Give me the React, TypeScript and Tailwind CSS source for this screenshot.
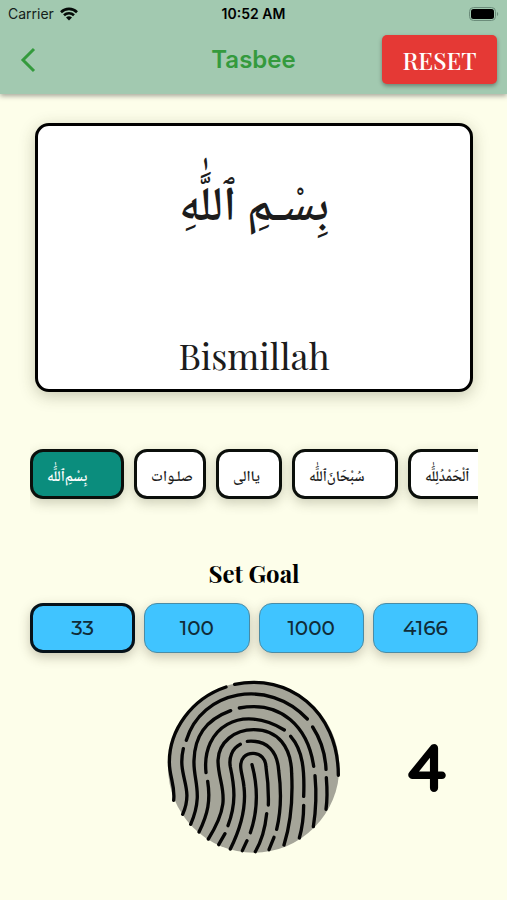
import React, { useState } from "react";

const phrases = [
  { text: "بِسْمِ‌ٱللَّٰه", width: "w-[94px]" },
  { text: "صلـوات", width: "w-[72px]" },
  { text: "ياالى", width: "w-[66px]" },
  { text: "سُبْحَانَ‌ٱللَّٰه", width: "w-[106px]" },
  { text: "ٱلْحَمْدُلِلَّٰه", width: "w-[106px]" },
];

const goals = [33, 100, 1000, 4166];

const ridges = [
  "M214 50C110 85 44 180 44 275C44 320 62 345 57 390",
  "M240 42C400 8 551 120 551 315",
  "M95 210C140 60 340 20 458 146",
  "M86 235C66 320 120 350 84 432",
  "M228 121C150 150 120 200 118 270C115 330 148 370 108 462",
  "M254 113C380 90 460 170 477 288",
  "M474 170C500 210 512 250 514 297",
  "M515 322C518 360 518 390 514 417",
  "M154 307C140 170 260 100 389 179",
  "M408 198C445 240 450 300 447 378",
  "M447 405C447 440 442 475 434 503",
  "M481 316C486 370 484 420 476 469",
  "M159 333C168 390 160 430 133 485",
  "M161 506C240 380 190 350 190 270C192 215 240 178 297 178C370 178 410 230 411 310C415 390 408 460 388 524",
  "M257 222C232 235 222 262 227 290C240 350 245 400 220 466",
  "M278 213C340 208 368 245 372 300C380 360 380 420 366 477",
  "M192 523L211 490",
  "M227 536C260 470 275 410 268 350C266 325 258 305 258 287C258 265 272 249 295 249C318 249 333 265 334 290C340 330 342 370 341 404",
  "M292 283C310 350 310 420 287 487",
  "M336 430C332 470 322 510 302 544",
  "M263 541L277 511",
  "M343 538L358 501",
];

function StatusBar() {
  return (
    <div className="grid h-7 grid-cols-3 items-center px-2 text-sm text-[#14201a]">
      <div className="flex items-center gap-1.5">
        <span>Carrier</span>
        <svg width="18" height="14" viewBox="0 0 18 14" fill="none" stroke="#050b08" strokeWidth="2.6" aria-hidden="true">
          <path d="M1 5.2a11.4 11.4 0 0 1 16 0" />
          <path d="M4 8.2a7.2 7.2 0 0 1 10 0" />
          <path d="M9 13.5 6 10.6a4.3 4.3 0 0 1 6 0z" fill="#050b08" stroke="none" />
        </svg>
      </div>
      <span className="text-center font-semibold text-black">10:52 AM</span>
      <svg className="justify-self-end" width="30" height="14" viewBox="0 0 30 14" aria-hidden="true">
        <rect x="0.5" y="0.5" width="26" height="13" rx="4" fill="none" stroke="#6b8c7a" />
        <rect x="2" y="2" width="23" height="10" rx="2.5" fill="#000" />
        <path d="M28 5c1.6.6 1.6 3.4 0 4z" fill="#6b8c7a" />
      </svg>
    </div>
  );
}

export default function App() {
  const [phrase, setPhrase] = useState(0);
  const [goal, setGoal] = useState(33);
  const [count, setCount] = useState(4);

  return (
    <div className="min-h-screen bg-[#fdfeea] font-['Inter',sans-serif] text-black">
      <header className="h-[94px] bg-[#a2c9b0] shadow-[0_2px_5px_rgba(0,0,0,0.35)]">
        <StatusBar />
        <div className="grid grid-cols-[1fr_auto_1fr] items-center px-2.5 pt-[7px]">
          <button aria-label="Back" className="flex h-12 w-9 items-center justify-center">
            <svg width="16" height="26" viewBox="0 0 16 26" fill="none" stroke="#349a3d" strokeWidth="3" aria-hidden="true">
              <path d="M14 2 3 13l11 11" />
            </svg>
          </button>
          <h1 className="text-2xl font-semibold text-[#349a3d]">Tasbee</h1>
          <button
            onClick={() => setCount(0)}
            className="h-[49px] w-[115px] justify-self-end rounded-[5px] bg-[#e53935] font-['Playfair_Display','Liberation_Serif',serif] text-2xl font-medium text-white shadow-[0_2px_4px_rgba(0,0,0,0.35)]"
          >
            RESET
          </button>
        </div>
      </header>

      <main className="pt-[29px] pr-[29px] pl-[30px]">
        <section className="mx-[5px] flex h-[269px] flex-col items-center justify-between rounded-[14px] border-[3px] border-black bg-white pt-10 pb-2 text-[#1c1c1c] shadow-[0_4px_16px_rgba(60,60,30,0.28)]">
          <p dir="rtl" lang="ar" className="font-['Noto_Naskh_Arabic','Amiri','DejaVu_Sans',sans-serif] text-[48px] leading-[88px] font-semibold">
            بِسْـمِ ٱللَّٰهِ
          </p>
          <p className="font-['Playfair_Display','Liberation_Serif',serif] text-[36px] leading-[52px]">Bismillah</p>
        </section>

        <div className="mt-[37px] flex gap-2.5 overflow-hidden pt-5 pb-6">
          {phrases.map((item, i) => (
            <button
              key={item.text}
              onClick={() => setPhrase(i)}
              lang="ar"
              className={`${item.width} h-[50px] shrink-0 rounded-[13px] border-[3px] border-[#0b0f0b] pt-2 pl-3.5 text-left font-['Noto_Naskh_Arabic','Amiri','DejaVu_Sans',sans-serif] text-[15px] font-semibold whitespace-nowrap shadow-[0_4px_12px_rgba(60,60,30,0.25)] ${
                i === phrase ? "bg-[#0b8d7d] text-white" : "bg-white text-[#1c1c1c]"
              }`}
            >
              {item.text}
            </button>
          ))}
        </div>

        <h2 className="mt-[35px] text-center font-['Playfair_Display','Liberation_Serif',serif] text-2xl leading-[30px] font-bold">
          Set Goal
        </h2>
        <div className="mt-[15px] grid grid-cols-4 gap-[9px]">
          {goals.map((value) => (
            <button
              key={value}
              onClick={() => setGoal(value)}
              className={`h-[50px] rounded-[13px] bg-[#40c4ff] font-['Montserrat','Lato',sans-serif] text-xl font-medium text-[#102c38] shadow-[0_4px_12px_rgba(60,50,30,0.28)] ${
                value === goal ? "border-[3px] border-[#06121a]" : "border border-[#4a8ca6]"
              }`}
            >
              {value}
            </button>
          ))}
        </div>

        <div className="mt-[27px] grid grid-cols-[1fr_auto_1fr] items-center">
          <span />
          <button aria-label="Count" onClick={() => setCount(count + 1)} className="rounded-full">
            <svg width="174" height="174" viewBox="37 29 522 522" aria-hidden="true">
              <circle cx="297" cy="290" r="257" fill="#a5a599" />
              <g fill="none" stroke="#050505" strokeWidth="10" strokeLinecap="round" strokeLinejoin="round">
                {ridges.map((d) => (
                  <path key={d} d={d} />
                ))}
              </g>
            </svg>
          </button>
          <output className="pl-9 text-center font-['Quicksand','Varela_Round','Montserrat','Lato',sans-serif] text-[68px] leading-[72px] font-bold">
            {count}
          </output>
        </div>
      </main>
    </div>
  );
}
